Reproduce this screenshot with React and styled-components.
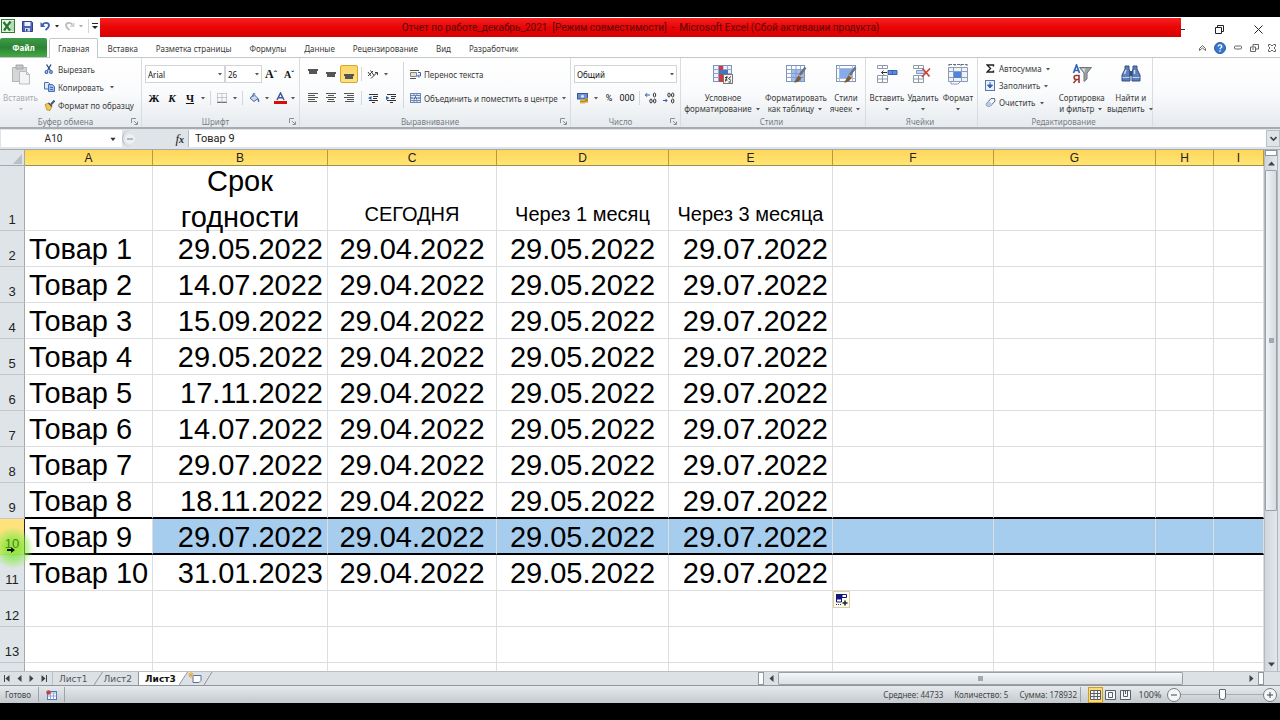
import styled, { createGlobalStyle, css } from 'styled-components';

const GlobalStyle = createGlobalStyle`
    * { box-sizing: border-box; }
    body {
        margin: 0;
        background: #000;
        font-family: 'Noto Sans', 'Open Sans', sans-serif;
        font-size: 8px;
        color: #3b3b3b;
    }
    button, input, select {
        margin: 0;
        padding: 0;
        border: 0;
        background: none;
        font: inherit;
        color: inherit;
        outline: none;
    }
    svg { display: block; flex: none; }
`;

const Window = styled.div`
    display: flex;
    flex-direction: column;
    height: 100vh;
    padding: 17px 0;
`;

/* ---------- title ---------- */

const TitleBar = styled.header`
    display: flex;
    flex: none;
    height: 21px;
    background: #fff;
`;
const QuickAccess = styled.div`
    display: flex;
    align-items: center;
    width: 100px;
    padding: 0 0 3px 1px;
`;
const QuickBtn = styled.button`
    display: flex;
    align-items: center;
    justify-content: center;
    width: ${(props) => props.$w || 18}px;
    height: 16px;
`;
const Title = styled.h1`
    flex: 1;
    margin: 1px 0;
    background: linear-gradient(#f62020, #e80505 50%, #d90000);
    color: #5c0505;
    font-family: Roboto, sans-serif;
    font-size: 10px;
    font-weight: 400;
    line-height: 19px;
    text-align: center;
    white-space: pre;
`;
const WindowBtns = styled.div`
    display: flex;
    align-items: center;
    justify-content: space-between;
    width: 99px;
    padding: 3px 17px 0 0;
`;

/* ---------- tabs ---------- */

const TabRow = styled.nav`
    display: flex;
    flex: none;
    height: 20px;
    background: #fff;
    border-bottom: 1px solid #c3c8cd;
`;
const FileTab = styled.button`
    width: 47px;
    margin-right: 2px;
    border-radius: 2px 2px 0 0;
    background: linear-gradient(#3f9b49, #2b8434 50%, #45a944);
    color: #fff;
    font-weight: 700;
`;
const Tab = styled.button`
    height: 20px;
    padding: 0 9px;
    white-space: nowrap;
    ${(props) => props.$active && css`
        border: 1px solid #c3c8cd;
        border-bottom: 0;
        border-radius: 2px 2px 0 0;
        background: #fff;
        padding: 0 8px;
    `}
`;
const HelpBtns = styled.div`
    display: flex;
    align-items: center;
    margin-left: auto;
`;

/* ---------- ribbon ---------- */

const Ribbon = styled.section`
    display: flex;
    flex: none;
    height: 71px;
    background: linear-gradient(#fff, #fafbfc 50%, #e6eaee);
    border-bottom: 2px solid #a6acb2;
`;
const Group = styled.div`
    display: flex;
    flex-direction: column;
    flex: none;
    width: ${(props) => props.$w}px;
    border-right: 1px solid #d9dde1;
`;
const GroupBody = styled.div`
    display: flex;
    height: 57px;
    padding: ${(props) => props.$pad || '4px 3px 0'};
`;
const GroupLabel = styled.div`
    display: flex;
    align-items: center;
    height: 12px;
    padding-right: 3px;
    color: #777d84;
    span { flex: 1; text-align: center; }
`;
const Col = styled.div`
    display: flex;
    flex-direction: column;
`;
const ToolRow = styled.div`
    display: flex;
    align-items: center;
    height: 24px;
`;
const Tool = styled.button`
    display: flex;
    align-items: center;
    justify-content: center;
    width: 18px;
    height: 18px;
    font-family: 'Liberation Serif', serif;
    font-size: ${(props) => props.$size || 11}px;
    font-weight: 700;
    color: #111;
    ${(props) => props.$on && css`
        border: 1px solid #d9a72b;
        border-radius: 2px;
        background: linear-gradient(#fbd66c, #fbe27f);
    `}
`;
const NumTool = styled(Tool)`
    font-family: Roboto, sans-serif;
    font-size: 9px;
    font-weight: 400;
`;
const CaretBox = styled.span`
    display: inline-flex;
    align-items: center;
    justify-content: center;
    width: 8px;
    height: 8px;
`;
const Sep = styled.span`
    width: 1px;
    height: ${(props) => props.$h || 14}px;
    margin: 0 ${(props) => props.$m || 2}px 0 3px;
    background: #d3d7db;
`;
const TextBtn = styled.button`
    display: flex;
    align-items: center;
    height: ${(props) => props.$h || 18}px;
    white-space: nowrap;
`;
const IconSlot = styled.span`
    display: flex;
    justify-content: center;
    width: 18px;
`;
const BigBtn = styled.button`
    display: flex;
    flex-direction: column;
    align-items: center;
    flex: none;
    width: ${(props) => props.$w}px;
    height: 50px;
    line-height: 11px;
    white-space: nowrap;
    color: ${(props) => (props.$off ? '#a9adb1' : 'inherit')};
    > svg { margin-bottom: 7px; }
    > span { height: 11px; }
`;
const ComboWrap = styled.label`
    display: flex;
    align-items: center;
    width: ${(props) => props.$w}px;
    height: 18px;
    border: 1px solid #d2d5d8;
    background: #fff;
    color: #111;
    select {
        flex: 1;
        min-width: 0;
        height: 16px;
        padding-left: 2px;
        appearance: none;
    }
`;

/* ---------- formula bar ---------- */

const FormulaBar = styled.div`
    display: flex;
    flex: none;
    height: 21px;
    padding: 1px 0 2px 1px;
    background: #dfe4e8;
    border-bottom: 1px solid #a5abb1;
    font-family: Roboto, sans-serif;
    font-size: 11px;
    color: #222;
`;
const NameBox = styled.label`
    display: flex;
    align-items: center;
    width: 121px;
    background: #fff;
    font-size: 10px;
    input { width: 105px; text-align: center; }
    span { margin-left: 3px; }
`;
const FxArea = styled.div`
    display: flex;
    align-items: center;
    justify-content: space-between;
    width: 67px;
    padding-right: 4px;
    border: 1px solid #b3b9bf;
    border-width: 0 1px;
    border-radius: 9px 0 0 9px;
`;
const FxBtn = styled.button`
    font-family: 'Liberation Serif', serif;
    font-size: 13px;
    font-style: italic;
    small { font-size: 10px; font-weight: 700; }
`;
const FormulaInput = styled.input`
    flex: 1;
    padding-left: 6px;
    background: #fff;
`;
const ExpandBtn = styled.button`
    display: flex;
    align-items: center;
    justify-content: center;
    width: 14px;
    border: 1px solid #b9bfc5;
`;

/* ---------- sheet ---------- */

const SheetArea = styled.main`
    display: flex;
    flex: 1;
    min-height: 0;
    background: #dfe4e8;
`;
const GridClip = styled.div`
    flex: 1;
    min-width: 0;
    overflow: hidden;
    background: #fff;
`;
const Grid = styled.table`
    width: 100%;
    table-layout: fixed;
    border-spacing: 0;
    font-family: 'Liberation Sans', Arial, sans-serif;
    color: #000;
    th, td { padding: 0; font-weight: 400; }
`;
const ColHead = styled.th`
    height: 16px;
    border-right: 1px solid #b79a3c;
    border-bottom: 1px solid #a08d4e;
    background: linear-gradient(#ffd65b, #ffe574);
    font-size: 12px;
    line-height: 14px;
    color: #222;
`;
const Corner = styled.td`
    height: 16px;
    border-right: 1px solid #a3a9af;
    border-bottom: 1px solid #a3a9af;
    background: #dfe4e8;
    svg { margin: 2px 2px 0 auto; }
`;
const RowHead = styled.th`
    position: relative;
    height: ${(props) => props.$h}px;
    border-right: 1px solid ${(props) => (props.$on ? '#222' : '#a3a9af')};
    border-bottom: 1px solid #c3c8cd;
    background: ${(props) => (props.$on ? '#ffe27c' : '#dfe4e8')};
    font-size: 13px;
    line-height: 21px;
    vertical-align: bottom;
    color: #222;
`;
const Cell = styled.td`
    border-right: 1px solid #dcdee0;
    border-bottom: ${(props) => (props.$line ? '2px solid #000' : '1px solid #dcdee0')};
    background: ${(props) => (props.$picked ? '#a7cdee' : '#fff')};
    vertical-align: top;
`;
const CellText = styled.div`
    display: flex;
    justify-content: ${(props) => props.$align};
    height: ${(props) => props.$h}px;
    padding: 0 4px;
    font-size: 29px;
    line-height: 36px;
    white-space: nowrap;
`;
const WrapText = styled(CellText)`
    align-items: center;
    padding-top: 2px;
    text-align: center;
    white-space: normal;
`;
const SmallText = styled(CellText)`
    align-items: flex-end;
    font-size: 20px;
    line-height: 32px;
`;
const FillTag = styled.button`
    display: flex;
    align-items: center;
    justify-content: center;
    width: 17px;
    height: 17px;
    border: 1px solid #dccf9a;
    background: #fbfbf6;
`;
/* mouse highlight drawn over the row header */
const Glow = styled.span`
    position: absolute;
    top: 8px;
    left: -8px;
    z-index: 2;
    width: 42px;
    height: 42px;
    border-radius: 50%;
    background: radial-gradient(rgba(120, 232, 50, 0.75) 25%, rgba(150, 235, 90, 0.5) 50%, rgba(190, 240, 150, 0) 70%);
    pointer-events: none;
    svg { margin: 20px 0 0 15px; }
`;
const RowNum = styled.span`
    position: relative;
    z-index: 3;
    color: ${(props) => (props.$on ? '#46841c' : 'inherit')};
`;

const VScroll = styled.div`
    display: flex;
    flex-direction: column;
    width: 16px;
    padding: 0 3px 0 0;
    border-left: 1px solid #b4babf;
    background: linear-gradient(90deg, #cfd5da, #e3e8eb 80%, #9ea5ab 81%, #dfe4e8 90%);
`;
const ScrollBtn = styled.button`
    display: flex;
    align-items: center;
    justify-content: center;
    width: ${(props) => props.$w || 12}px;
    height: 14px;
`;
const SplitBox = styled.span`
    width: ${(props) => props.$w}px;
    height: ${(props) => props.$h}px;
    border: 1px solid #8f969d;
    background: #fff;
`;
const VTrack = styled.div`
    flex: 1;
`;
const VThumb = styled.div`
    display: flex;
    align-items: center;
    justify-content: center;
    height: 70%;
    border: 1px solid #9aa1a8;
    border-radius: 1px;
    background: linear-gradient(90deg, #f1f4f6, #d5dbe0);
`;
const Grip = styled.span`
    width: 5px;
    height: 5px;
    background: #a2a8ae;
`;

/* ---------- bottom bars ---------- */

const SheetBar = styled.div`
    display: flex;
    flex: none;
    height: 15px;
    background: #dce1e5;
    border-top: 1px solid #b9bfc5;
    border-bottom: 1px solid #8f969c;
    font-family: 'DejaVu Sans', sans-serif;
    font-size: 9px;
`;
const SheetNav = styled.div`
    display: flex;
    width: 53px;
    padding-left: 1px;
    border-right: 1px solid #b9bfc5;
    button { width: 12px; display: flex; align-items: center; justify-content: center; }
`;
const SheetTab = styled.button`
    padding: 0 6px;
    color: #555;
    & + svg + & { padding-left: 1px; }
    ${(props) => props.$active && css`
        padding-right: 3px;
        border-left: 1px solid #8f969c;
        background: #fff;
        font-weight: 700;
        color: #111;
    `}
`;
const NewSheet = styled.button`
    display: flex;
    align-items: center;
`;
const HScroll = styled.div`
    display: flex;
    align-items: center;
    width: 506px;
    margin-left: auto;
    margin-right: 16px;
`;
const HTrack = styled.div`
    flex: 1;
    height: 13px;
`;
const HThumb = styled(VThumb)`
    width: 87%;
    height: 13px;
    background: linear-gradient(#f4f6f8, #dbe0e4);
`;

const StatusBar = styled.footer`
    display: flex;
    align-items: center;
    flex: none;
    height: 17px;
    padding: 0 3px 0 5px;
    background: linear-gradient(#e6eaed, #c3c9ce);
    color: #444;
`;
const StatusSep = styled.span`
    width: 1px;
    height: 15px;
    margin: 0 7px 0 ${(props) => props.$m || 7}px;
    background: #9ca3a9;
`;
const Stats = styled.div`
    display: flex;
    gap: 11px;
    margin-left: auto;
`;
const ViewBtn = styled.button`
    display: flex;
    align-items: center;
    justify-content: center;
    width: 15px;
    height: 16px;
    ${(props) => props.$on && css`
        border: 1px solid #d09d25;
        background: #fbdc74;
    `}
`;
const ZoomText = styled.button`
    width: 34px;
    font-size: 9px;
`;
const RoundBtn = styled.button`
    display: flex;
    align-items: center;
    justify-content: center;
    width: 14px;
    height: 14px;
    border: 1px solid #767d83;
    border-radius: 50%;
    background: #f4f6f7;
`;
const ZoomRange = styled.input`
    width: 82px;
    height: 14px;
    appearance: none;
    background: linear-gradient(#a9afb4, #a9afb4) center / 100% 1px no-repeat;
    &::-webkit-slider-thumb {
        appearance: none;
        width: 7px;
        height: 11px;
        border: 1px solid #5d646a;
        border-radius: 1px 1px 3px 3px;
        background: #fff;
    }
`;

/* ---------- icons ---------- */

const Caret = ({ c = '#555', s = 6 }) => (
    <CaretBox>
        <svg width={s} height={s} viewBox="0 0 6 6"><path d="M1 2h4L3 4.500z" fill={c} /></svg>
    </CaretBox>
);

const Arrow = ({ dir, bar }) => {
    const turn = { right: 0, down: 90, left: 180, up: 270 }[dir];
    return (
        <svg width="9" height="9" viewBox="0 0 9 9">
            <g transform={`rotate(${turn} 4.5 4.5)`}>
                <path d="M2.500 1l4 3.500-4 3.500z" fill="#3c4247" />
                {bar && <path d="M7.500 1v7" stroke="#3c4247" />}
            </g>
        </svg>
    );
};

const Launcher = () => (
    <svg width="7" height="7" viewBox="0 0 7 7" fill="none" stroke="#8a9097">
        <path d="M.5 5V.5H5M3 3l3 3M6.500 3.500v3h-3" />
    </svg>
);

const ExcelIcon = () => (
    <svg width="14" height="14" viewBox="0 0 14 14">
        <rect x=".5" y=".5" width="13" height="13" fill="#e5f2e3" stroke="#2b7a35" />
        <path d="M9 2h4v10H9z" fill="#b9d9b5" />
        <path d="M2.500 3l6.500 8.500M9.500 2.500L3 11.500" stroke="#1f7a2d" strokeWidth="2.200" />
    </svg>
);

const SaveIcon = () => (
    <svg width="11" height="11" viewBox="0 0 11 11">
        <path d="M.5.5h9l1 1v9H.5z" fill="#4b63b8" stroke="#2c3f87" />
        <path d="M2.500 1h6v4h-6z" fill="#eef2fb" />
        <path d="M3 7h5v3.500H3z" fill="#c9d3ee" />
        <path d="M4 8h1.500v2.500H4z" fill="#2c3f87" />
    </svg>
);

const UndoIcon = ({ off }) => (
    <svg width="11" height="10" viewBox="0 0 11 10">
        <g transform={off ? 'translate(11 0) scale(-1 1)' : undefined} fill="none" stroke={off ? '#b9bdc2' : '#3861b8'}>
            <path d="M2 4.500C4 1 9 1 9 4.500c0 2-1.500 3-3.500 4.500" strokeWidth="1.900" />
            <path d="M.5 1v5h5z" fill={off ? '#d0d3d6' : '#3861b8'} stroke="none" />
        </g>
    </svg>
);

const PasteIcon = () => (
    <svg width="20" height="21" viewBox="0 0 20 21">
        <path d="M1.500 3.500h14v14h-14z" fill="#d4d6d8" stroke="#b3b6b9" />
        <path d="M5 1h7v4H5z" fill="#c3c6c9" stroke="#a5a8ab" />
        <path d="M8.500 7.500h7l3 3v9.500h-10z" fill="#f3f4f5" stroke="#b9bcbf" />
        <path d="M15.500 7.500v3h3" fill="none" stroke="#b9bcbf" />
    </svg>
);

const CutIcon = () => (
    <svg width="10" height="10" viewBox="0 0 10 10" fill="none" stroke="#27457f" strokeWidth="1.300">
        <path d="M2.500.5l4 6M7 .5l-3.500 6" />
        <circle cx="2.500" cy="8" r="1.300" stroke="#3a68b8" />
        <circle cx="7" cy="8" r="1.300" stroke="#3a68b8" />
    </svg>
);

const CopyIcon = () => (
    <svg width="11" height="10" viewBox="0 0 11 10" fill="#dfe9f8" stroke="#4a70b5">
        <path d="M.5.5h4l1.500 1.500v5H.5z" />
        <path d="M4.500 2.500h4l2 2v5h-6z" fill="#9dbcec" />
        <path d="M6 5.500h3M6 7.500h3" />
    </svg>
);

const BrushIcon = () => (
    <svg width="11" height="11" viewBox="0 0 11 11">
        <path d="M10.500.5L7 4.500" stroke="#3f5689" strokeWidth="2" />
        <path d="M1 4.500l4-1.500 3 3-2 4.500L3 10z" fill="#efc94c" stroke="#a98021" strokeWidth=".7" />
        <path d="M4.500 3l3.500 3.500" stroke="#4b4b4b" strokeWidth="1.300" />
    </svg>
);

const BorderIcon = () => (
    <svg width="10" height="10" viewBox="0 0 10 10" fill="none" stroke="#9a9fa5" strokeDasharray="1 1">
        <path d="M.5.5h9v8H.5zM5 .5v8M.5 4.500h9" />
        <path d="M0 9.500h10" stroke="#777" strokeDasharray="none" />
    </svg>
);

const BucketIcon = () => (
    <svg width="11" height="11" viewBox="0 0 11 11">
        <path d="M1 5l4-3.500 4 4-4 3z" fill="#cbd9ef" stroke="#4b6799" />
        <path d="M4 4V1.500C4 0 6 0 6 1.500" fill="none" stroke="#4b6799" />
        <path d="M8.500 5c2 .5 2 3 1.500 4.500C8.500 9 8.500 7 8.500 5z" fill="#3b67b7" />
    </svg>
);

const FontColorIcon = () => (
    <svg width="13" height="13" viewBox="0 0 13 13">
        <path d="M3 8l3.500-7L10 8M4.300 5.700h4.400" fill="none" stroke="#3c5a99" strokeWidth="1.500" />
        <path d="M0 9h13v3H0z" fill="#d90c0c" />
    </svg>
);

// one [x1, x2] pair per line
const Lines = ({ rows, top = 0, step = 2 }) => (
    <svg width="10" height="10" viewBox="0 0 10 10" stroke="#555">
        {rows.map(([a, b], i) => <path key={i} d={`M${a} ${top + i * step + 0.5}H${b}`} />)}
    </svg>
);
const BLOCK = [[0, 10], [0, 10], [1, 9], [1, 9], [1, 9]];

const OrientIcon = () => (
    <svg width="12" height="11" viewBox="0 0 12 11" fill="none" stroke="#3a3a3a">
        <path d="M1 3l3 4M3.500 1.500l3.500 5M1 7l5-5M4 9.500L10 3.500M8 3.500h2.500V6" />
    </svg>
);

const IndentIcon = ({ flip }) => (
    <svg width="11" height="10" viewBox="0 0 11 10" stroke="#333">
        <path d="M1 1.500h9M5 3.500h5M5 5.500h4M1 7.500h9M4 9.500h3" />
        <path d={flip ? 'M0 3l3.500 2L0 7z' : 'M3.500 3L0 5l3.500 2z'} fill="#2f5ca8" stroke="none" />
    </svg>
);

const WrapIcon = () => (
    <svg width="11" height="11" viewBox="0 0 11 11" fill="none">
        <path d="M0 1.500h9M0 9.500h6" stroke="#555" />
        <path d="M.5 3.500h6v4h-6z" fill="#f5dfb5" stroke="#7d86a0" />
        <path d="M8 3.500h2.500V7H8M9 5.500L7.500 7 9 8.500" stroke="#3b63ad" />
    </svg>
);

const MergeIcon = () => (
    <svg width="11" height="10" viewBox="0 0 11 10">
        <rect x=".5" y=".5" width="10" height="9" fill="#e7eef9" stroke="#6b86b8" />
        <path d="M.5 2.500h10M.5 7.500h10M4 .5v2M7 .5v2M4 7.500v2M7 7.500v2" stroke="#6b86b8" />
        <path d="M1 5h2.500M10 5H7.500M4.200 6.500L5.500 3.500l1.300 3" stroke="#27457f" fill="none" />
    </svg>
);

const MoneyIcon = () => (
    <svg width="12" height="11" viewBox="0 0 12 11">
        <rect x=".5" y=".5" width="10" height="5.500" fill="#6d8fd2" stroke="#35569d" />
        <circle cx="5.500" cy="3.200" r="1.500" fill="#dfe9f9" />
        <path d="M3 7h5v3.500H3z" fill="#e4b83d" />
        <path d="M8 5h3v4.500H8z" fill="#c9962b" />
        <path d="M3 8.500h5M8 7h3" stroke="#8d6a1a" strokeWidth=".6" />
    </svg>
);

const DecIcon = ({ more }) => (
    <svg width="12" height="12" viewBox="0 0 12 12" fill="none" stroke="#333">
        <ellipse cx={more ? 9.500 : 6} cy="3" rx="1.200" ry="2" />
        {!more && <ellipse cx="9.700" cy="3" rx="1.200" ry="2" />}
        <ellipse cx="9.700" cy="9" rx="1.200" ry="2" />
        {more && <ellipse cx="6" cy="9" rx="1.200" ry="2" />}
        <path d={more ? 'M0 3h5M2 1.200L.5 3 2 4.800' : 'M0 8.500h4M2.500 6.800L4 8.500l-1.500 1.700'} stroke="#2f5ca8" />
    </svg>
);

const SheetGrid = ({ children, fill = '#eef3fb' }) => (
    <svg width="22" height="21" viewBox="0 0 22 21">
        <rect x="1.500" y="1.500" width="18" height="16" fill={fill} stroke="#7b93bd" />
        <path d="M1.500 5.500h18M1.500 9.500h18M1.500 13.500h18M6.500 1.500v16M11 1.500v16M15.500 1.500v16" stroke="#8fa5cb" />
        {children}
    </svg>
);

const Paint = () => (
    <>
        <path d="M20.500 3.500L14 12" stroke="#68707c" strokeWidth="2.400" />
        <path d="M14.500 11l2 2c-1 4-4 5.500-7.500 5.500 2-2 2-5 5.500-7.500z" fill="#7a5a3c" />
        <path d="M14 11l2.500 2" stroke="#d6b25e" strokeWidth="1.500" />
    </>
);

const CondIcon = () => (
    <SheetGrid>
        <path d="M7 2h4v4H7zM7 14h4v4H7z" fill="#cf3b3b" />
        <path d="M7 6h9v4H7z" fill="#4672c4" />
        <path d="M7 10h6v4H7z" fill="#cf3b3b" />
        <rect x="11.500" y="10.500" width="9" height="9" fill="#f4f4f4" stroke="#777" />
        <path d="M13 13.500h2.500M13 16h2.500M15 12l-1.500 5.500M19 12.500l-2.500 2 2.500 2M16.500 18H19" fill="none" stroke="#333" />
    </SheetGrid>
);
const TableIcon = () => (
    <SheetGrid fill="#fff">
        <path d="M7 6h12v12H7z" fill="#6e97e0" opacity=".65" />
        <Paint />
    </SheetGrid>
);
const StyleIcon = () => (
    <svg width="22" height="21" viewBox="0 0 22 21">
        <rect x="1.500" y="1.500" width="19" height="16" fill="#fff" stroke="#7b93bd" />
        <path d="M1.500 4.500h19M1.500 14.500h19M4.500 1.500v16M17.500 1.500v16" stroke="#a9b9d6" />
        <path d="M5 5h12v9H5z" fill="#86abea" />
        <Paint />
    </svg>
);

const Cells3 = ({ children }) => (
    <svg width="22" height="21" viewBox="0 0 22 21">
        <g fill="#fff" stroke="#8c99ad">
            <path d="M1.500 1.500h10v3h-10zM6.500 1.500v3" />
            <path d="M1.500 11.500h10v7h-10zM6.500 11.500v7M1.500 15h10" />
        </g>
        {children}
    </svg>
);
const InsertIcon = () => (
    <Cells3>
        <path d="M12 6.500h9v4h-9zM16.500 6.500v4" fill="#5d8be0" stroke="#3c5fa8" />
        <path d="M11 8.500H5.500M7.500 6.500l-2 2 2 2" fill="none" stroke="#333" />
    </Cells3>
);
const DeleteIcon = () => (
    <Cells3>
        <path d="M4.500 6.500h8v3h-8z" fill="#c6d6f3" stroke="#8299c4" />
        <path d="M10.500 4.500l7 8M18 4.500l-8 8.500" stroke="#d2402f" strokeWidth="1.700" />
    </Cells3>
);
const FormatIcon = () => (
    <svg width="22" height="21" viewBox="0 0 22 21">
        <path d="M2 .5h18M2 0v2M8 0v2M14 0v2M20 0v2" stroke="#66707f" strokeDasharray="3 1" />
        <path d="M1.500 3.500h19v14h-19zM6.500 3.500v14M14.500 3.500v14M1.500 7.500h19M1.500 13.500h19" fill="#eef3fb" stroke="#8c9cb8" />
        <path d="M7 8h7v6H7z" fill="#4f83dd" />
        <path d="M4 18v2h7l2-2" fill="#fff" stroke="#8c9cb8" />
    </svg>
);

const SigmaIcon = () => (
    <svg width="9" height="9" viewBox="0 0 9 9" fill="none" stroke="#222" strokeWidth="1.400">
        <path d="M7.500 2.500V1H1.200l3.300 3.500L1.200 8h6.300V6.500" />
    </svg>
);
const FillIcon = () => (
    <svg width="10" height="11" viewBox="0 0 10 11">
        <rect x=".5" y=".5" width="9" height="10" fill="#e9f0fc" stroke="#5876b0" />
        <path d="M5 2v4.500M2.500 5L5 8l2.500-3z" fill="#2f62c0" stroke="#2f62c0" />
    </svg>
);
const EraserIcon = () => (
    <svg width="11" height="9" viewBox="0 0 11 9">
        <path d="M1 6l5-5.500h3.500L10 3 5.500 8H2z" fill="#f3f6fb" stroke="#566a92" />
        <path d="M1 6l3-3 3 3-1.500 2H2z" fill="#b8c8e6" />
    </svg>
);
const SortIcon = () => (
    <svg width="22" height="21" viewBox="0 0 22 21">
        <path d="M2.500 9L5.500 1l3 8M3.500 6.500h4" fill="none" stroke="#3366bb" strokeWidth="1.700" />
        <path d="M8 19v-7.500H5c-2.500 0-2.500 4 0 4h3M5.500 15.500L2.500 19" fill="none" stroke="#a23434" strokeWidth="1.600" />
        <path d="M8.500 3.500h12l-4.500 5.500v6l-3 2.500V9z" fill="#9da2a8" stroke="#70757b" />
        <path d="M10.500 4.500h4l-1 4z" fill="#d8dbde" />
    </svg>
);
const FindIcon = () => (
    <svg width="20" height="21" viewBox="0 0 20 21">
        <path d="M4 2h4v3l1 3v9H1v-6l3-6zM12 2h4v3l3 6v6h-8V8l1-3z" fill="#5c7fbd" stroke="#34507f" />
        <path d="M8.500 7h3v5h-3z" fill="#34507f" />
        <path d="M3.500 10l1.500-4M13.500 10V6" stroke="#c9dbf5" strokeWidth="1.500" />
        <path d="M1.500 13.500h7M11.500 13.500h7" stroke="#c2d0e8" />
    </svg>
);

const TagIcon = () => (
    <svg width="13" height="13" viewBox="0 0 13 13">
        <path d="M1 1h6v5H1z" fill="#15157a" />
        <path d="M7 1.500h4.500v3H7zM1.500 6h5v3h-5z" fill="#fff" stroke="#15157a" />
        <path d="M1 11.500h6" stroke="#333" strokeDasharray="1 1" />
        <path d="M7.500 10h5M10 7.500v5" stroke="#222" strokeWidth="1.500" />
    </svg>
);

const ViewIcon = ({ kind }) => (
    <svg width="11" height="10" viewBox="0 0 11 10" fill="none" stroke="#5a6066">
        <path d="M.5.5h10v9H.5z" fill="#f7f8f8" />
        {kind === 'grid' && <path d="M.5 3.500h10M.5 6.500h10M4 .5v9M7.500 .5v9" />}
        {kind === 'page' && <path d="M3.500 2.500h4v5h-4z" />}
        {kind === 'break' && <path d="M3.500 0v6.500h4V0M5.500 0v4" />}
    </svg>
);

const MacroIcon = () => (
    <svg width="11" height="10" viewBox="0 0 11 10">
        <rect x="1.500" y="1.500" width="9" height="8" fill="#fff" stroke="#4e74b8" />
        <path d="M1.500 3h9M4.500 3v6.500M7.500 3v6.500M1.500 6h9" stroke="#8aa7db" />
        <circle cx="2.500" cy="2.500" r="2.200" fill="#c2433c" />
    </svg>
);

const NewSheetIcon = () => (
    <svg width="25" height="13" viewBox="0 0 25 13">
        <path d="M5 3.500h8v5l-2 2H5z" fill="#fff" stroke="#5a6fa8" />
        <path d="M3 0v6M0 3h6M1 1l4 4M5 1L1 5" stroke="#e0a93a" />
        <path d="M16 13l8-13" stroke="#8f969c" />
    </svg>
);

const Slant = ({ fill = 'none' }) => (
    <svg width="9" height="13" viewBox="0 0 9 13">
        <path d="M0 13L8.500 0H0z" fill={fill} />
        <path d="M0 13L8.500 0" stroke="#8f969c" />
    </svg>
);

/* ---------- data ---------- */

const TABS = ['Главная', 'Вставка', 'Разметка страницы', 'Формулы', 'Данные', 'Рецензирование', 'Вид', 'Разработчик'];
const COLS = [['A', 128], ['B', 175], ['C', 169], ['D', 172], ['E', 164], ['F', 161], ['G', 162], ['H', 58], ['I']];
const DATES = [
    '29.05.2022', '14.07.2022', '15.09.2022', '29.05.2022', '17.11.2022',
    '14.07.2022', '29.07.2022', '18.11.2022', '29.07.2022', '31.01.2023',
];
const ROWS = [
    ['', 'Срок годности', 'СЕГОДНЯ', 'Через 1 месяц', 'Через 3 месяца'],
    ...DATES.map((date, i) => [`Товар ${i + 1}`, date, '29.04.2022', '29.05.2022', '29.07.2022']),
    [], [], [],
];
const ALIGN = ['flex-start', 'flex-end', 'center', 'center', 'flex-end'];
const PICKED = 10;

const Label = ({ children, launch }) => (
    <GroupLabel><span>{children}</span>{launch && <Launcher />}</GroupLabel>
);

const Combo = ({ value, w, label }) => (
    <ComboWrap $w={w}>
        <select aria-label={label}><option>{value}</option></select>
        <Caret />
    </ComboWrap>
);

const Header = () => (
    <>
        <TitleBar>
            <QuickAccess>
                <ExcelIcon />
                <QuickBtn $w={26} aria-label="Сохранить"><SaveIcon /></QuickBtn>
                <QuickBtn $w={10} aria-label="Отменить"><UndoIcon /></QuickBtn>
                <QuickBtn $w={12} aria-label="Список отмены"><Caret c="#222" /></QuickBtn>
                <QuickBtn $w={14} aria-label="Вернуть"><UndoIcon off /></QuickBtn>
                <QuickBtn $w={9} aria-label="Список возврата"><Caret c="#aaa" /></QuickBtn>
                <Sep $m={1} />
                <QuickBtn $w={10} aria-label="Настройка панели">
                    <svg width="6" height="7" viewBox="0 0 6 7"><path d="M0 .5h6" stroke="#222" /><path d="M0 3h6L3 6z" fill="#222" /></svg>
                </QuickBtn>
            </QuickAccess>
            <Title>{'Отчет по работе_декабрь_2021  [Режим совместимости]  -  Microsoft Excel (Сбой активации продукта)'}</Title>
            <WindowBtns>
                <QuickBtn $w={4} aria-label="Свернуть">
                    <svg width="4" height="9" viewBox="0 0 4 9"><path d="M0 4.500h4" stroke="#333" /></svg>
                </QuickBtn>
                <QuickBtn $w={30} aria-label="Развернуть">
                    <svg width="9" height="9" viewBox="0 0 9 9" fill="none" stroke="#222"><path d="M.5 2.500h6v6h-6zM2.500 2V.5h6v6H7" /></svg>
                </QuickBtn>
                <QuickBtn $w={9} aria-label="Закрыть">
                    <svg width="9" height="9" viewBox="0 0 9 9" stroke="#222"><path d="M.5.5l8 8M8.500.5l-8 8" /></svg>
                </QuickBtn>
            </WindowBtns>
        </TitleBar>
        <TabRow>
            <FileTab>Файл</FileTab>
            {TABS.map((name, i) => <Tab key={name} $active={i === 0}>{name}</Tab>)}
            <HelpBtns>
                <QuickBtn aria-label="Свернуть ленту">
                    <svg width="7" height="6" viewBox="0 0 7 6" fill="none" stroke="#666"><path d="M.5 3.500l3-3 3 3v2l-3-2.500-3 2.500z" /></svg>
                </QuickBtn>
                <QuickBtn aria-label="Справка">
                    <svg width="12" height="12" viewBox="0 0 12 12" fill="none">
                        <circle cx="6" cy="6" r="5.500" fill="#3576cf" stroke="#2a5ca5" />
                        <path d="M4.200 4.500C4.200 2.300 7.800 2.300 7.800 4.500 7.800 5.800 6 5.800 6 7.300M6 8.300v1.400" stroke="#fff" strokeWidth="1.300" />
                    </svg>
                </QuickBtn>
                <QuickBtn $w={17} aria-label="Свернуть книгу">
                    <svg width="8" height="5" viewBox="0 0 8 5" fill="none" stroke="#666"><rect x=".5" y="1" width="7" height="3" rx="1" /></svg>
                </QuickBtn>
                <QuickBtn $w={17} aria-label="Восстановить книгу">
                    <svg width="9" height="8" viewBox="0 0 9 8" fill="#fff" stroke="#666"><path d="M3 .5h5.500v4.500H3z" /><path d="M.5 3h5v4.500h-5zM2 5h2" /></svg>
                </QuickBtn>
                <QuickBtn $w={17} aria-label="Закрыть книгу">
                    <svg width="8" height="8" viewBox="0 0 8 8" fill="#fff" stroke="#666"><path d="M.5.5h2L4 2 5.500.5h2v2L6 4l1.500 1.500v2h-2L4 6 2.500 7.500h-2v-2L2 4 .5 2.500z" /></svg>
                </QuickBtn>
            </HelpBtns>
        </TabRow>
    </>
);

const RibbonPanel = () => (
    <Ribbon>
        <Group $w={142}>
            <GroupBody $pad="2px 0 0 1px">
                <GroupBody $pad="4px 0 0">
                    <BigBtn $w={39} $off><PasteIcon />Вставить<Caret c="#bbb" /></BigBtn>
                </GroupBody>
                <Col>
                    <TextBtn><IconSlot><CutIcon /></IconSlot>Вырезать</TextBtn>
                    <TextBtn><IconSlot><CopyIcon /></IconSlot>Копировать&ensp;<Caret /></TextBtn>
                    <TextBtn><IconSlot><BrushIcon /></IconSlot>Формат по образцу</TextBtn>
                </Col>
            </GroupBody>
            <Label launch>Буфер обмена</Label>
        </Group>

        <Group $w={158}>
            <GroupBody>
                <Col>
                    <ToolRow>
                        <Combo value="Arial" w={80} label="Шрифт" />
                        <Combo value="26" w={37} label="Размер шрифта" />
                        <Tool $size={12}>A<sup>ˆ</sup></Tool>
                        <Tool $size={10}>A<sup>ˇ</sup></Tool>
                    </ToolRow>
                    <ToolRow>
                        <Tool>Ж</Tool>
                        <Tool><i>К</i></Tool>
                        <Tool><u>Ч</u></Tool>
                        <Caret />
                        <Sep />
                        <Tool aria-label="Границы"><BorderIcon /></Tool>
                        <Caret />
                        <Sep />
                        <Tool aria-label="Цвет заливки"><BucketIcon /></Tool>
                        <Caret />
                        <Tool aria-label="Цвет текста"><FontColorIcon /></Tool>
                        <Caret />
                    </ToolRow>
                </Col>
            </GroupBody>
            <Label launch>Шрифт</Label>
        </Group>

        <Group $w={271}>
            <GroupBody $pad="4px 0 0 4px">
                <Col>
                    <ToolRow>
                        <Tool aria-label="По верхнему краю"><Lines rows={BLOCK} step={1} /></Tool>
                        <Tool aria-label="По середине"><Lines rows={BLOCK} top={3} step={1} /></Tool>
                        <Tool $on aria-label="По нижнему краю"><Lines rows={BLOCK} top={5} step={1} /></Tool>
                        <Sep />
                        <Tool aria-label="Ориентация"><OrientIcon /></Tool>
                        <Caret />
                    </ToolRow>
                    <ToolRow>
                        <Tool aria-label="По левому краю"><Lines rows={[[0, 10], [0, 7], [0, 10], [0, 7], [0, 9]]} /></Tool>
                        <Tool aria-label="По центру"><Lines rows={[[0, 10], [2, 8], [0, 10], [2, 8], [1, 9]]} /></Tool>
                        <Tool aria-label="По правому краю"><Lines rows={[[0, 10], [3, 10], [0, 10], [3, 10], [1, 10]]} /></Tool>
                        <Sep />
                        <Tool aria-label="Уменьшить отступ"><IndentIcon /></Tool>
                        <Tool aria-label="Увеличить отступ"><IndentIcon flip /></Tool>
                    </ToolRow>
                </Col>
                <Sep $h={46} />
                <Col>
                    <ToolRow><TextBtn><IconSlot><WrapIcon /></IconSlot>Перенос текста</TextBtn></ToolRow>
                    <ToolRow><TextBtn><IconSlot><MergeIcon /></IconSlot>Объединить и поместить в центре&nbsp;<Caret /></TextBtn></ToolRow>
                </Col>
            </GroupBody>
            <Label launch>Выравнивание</Label>
        </Group>

        <Group $w={110}>
            <GroupBody>
                <Col>
                    <ToolRow><Combo value="Общий" w={103} label="Числовой формат" /></ToolRow>
                    <ToolRow>
                        <Tool aria-label="Денежный формат"><MoneyIcon /></Tool>
                        <Caret />
                        <NumTool>%</NumTool>
                        <NumTool>000</NumTool>
                        <Sep />
                        <Tool aria-label="Увеличить разрядность"><DecIcon more /></Tool>
                        <Tool aria-label="Уменьшить разрядность"><DecIcon /></Tool>
                    </ToolRow>
                </Col>
            </GroupBody>
            <Label launch>Число</Label>
        </Group>

        <Group $w={185}>
            <GroupBody $pad="6px 0 0 2px">
                <BigBtn $w={80}><CondIcon />Условное<span>форматирование <Caret /></span></BigBtn>
                <BigBtn $w={66}><TableIcon />Форматировать<span>как таблицу <Caret /></span></BigBtn>
                <BigBtn $w={34}><StyleIcon />Стили<span>ячеек <Caret /></span></BigBtn>
            </GroupBody>
            <Label>Стили</Label>
        </Group>

        <Group $w={112}>
            <GroupBody $pad="6px 0 0 3px">
                <BigBtn $w={36}><InsertIcon />Вставить<Caret /></BigBtn>
                <BigBtn $w={36}><DeleteIcon />Удалить<Caret /></BigBtn>
                <BigBtn $w={34}><FormatIcon />Формат<Caret /></BigBtn>
            </GroupBody>
            <Label>Ячейки</Label>
        </Group>

        <Group $w={175}>
            <GroupBody $pad="2px 0 0 3px">
                <Col>
                    <TextBtn $h={17}><IconSlot><SigmaIcon /></IconSlot>Автосумма&nbsp;<Caret /></TextBtn>
                    <TextBtn $h={17}><IconSlot><FillIcon /></IconSlot>Заполнить&nbsp;<Caret /></TextBtn>
                    <TextBtn $h={17}><IconSlot><EraserIcon /></IconSlot>Очистить&nbsp;<Caret /></TextBtn>
                </Col>
                <GroupBody $pad="4px 0 0 4px">
                    <BigBtn $w={52}><SortIcon />Сортировка<span>и фильтр <Caret /></span></BigBtn>
                    <BigBtn $w={46}><FindIcon />Найти и<span>выделить <Caret /></span></BigBtn>
                </GroupBody>
            </GroupBody>
            <Label>Редактирование</Label>
        </Group>
    </Ribbon>
);

const SheetCell = ({ num, col, h, children }) => {
    if (num > 1) {
        return <CellText $h={h} $align={ALIGN[col]}>{children}</CellText>;
    }
    const Text = col === 1 ? WrapText : SmallText;
    return <Text $h={h} $align="center">{children}</Text>;
};

const SheetRow = ({ num, data }) => {
    const h = num === 1 ? 65 : 36;
    const on = num === PICKED;
    const line = on || num === PICKED - 1;
    return (
        <tr>
            <RowHead $h={h} $on={on} scope="row">
                {on && <Glow><svg width="8" height="6" viewBox="0 0 8 6"><path d="M0 2h4V0l4 3-4 3V4H0z" fill="#111" /></svg></Glow>}
                {num < ROWS.length && <RowNum $on={on}>{num}</RowNum>}
            </RowHead>
            {COLS.map(([name], i) => (
                <Cell key={name} $line={line} $picked={on && i > 0}>
                    {num === 12 && name === 'F' && <FillTag aria-label="Параметры автозаполнения"><TagIcon /></FillTag>}
                    {data[i] && <SheetCell num={num} col={i} h={line ? h - 2 : h - 1}>{data[i]}</SheetCell>}
                </Cell>
            ))}
        </tr>
    );
};

const App = () => {
    return(
        <Window>
            <GlobalStyle />
            <Header />
            <RibbonPanel />

            <FormulaBar>
                <NameBox><input aria-label="Имя" defaultValue="A10" /><Caret c="#333" s={8} /></NameBox>
                <FxArea>
                    <svg width="16" height="14" viewBox="0 0 16 14"><circle cx="7" cy="7" r="5" fill="#eef1f3" /><path d="M4 7h6" stroke="#b3b9bf" strokeWidth="2" /></svg>
                    <FxBtn>f<small>x</small></FxBtn>
                </FxArea>
                <FormulaInput aria-label="Формула" defaultValue="Товар 9" />
                <ExpandBtn aria-label="Развернуть строку формул">
                    <svg width="7" height="6" viewBox="0 0 7 6" fill="none" stroke="#444" strokeWidth="1.600"><path d="M.5 1l3 3 3-3" /></svg>
                </ExpandBtn>
            </FormulaBar>

            <SheetArea>
                <GridClip>
                    <Grid>
                        <colgroup>
                            <col width="25" />
                            {COLS.map(([name, w]) => <col key={name} width={w} />)}
                        </colgroup>
                        <thead>
                            <tr>
                                <Corner><svg width="9" height="10" viewBox="0 0 9 10"><path d="M9 0v10H0z" fill="#b9c0c7" /></svg></Corner>
                                {COLS.map(([name]) => <ColHead key={name} scope="col">{name}</ColHead>)}
                            </tr>
                        </thead>
                        <tbody>
                            {ROWS.map((data, i) => <SheetRow key={i} num={i + 1} data={data} />)}
                        </tbody>
                    </Grid>
                </GridClip>
                <VScroll>
                    <SplitBox $w={12} $h={6} />
                    <ScrollBtn aria-label="Вверх"><Arrow dir="up" /></ScrollBtn>
                    <VTrack><VThumb><Grip /></VThumb></VTrack>
                    <ScrollBtn aria-label="Вниз"><Arrow dir="down" /></ScrollBtn>
                </VScroll>
            </SheetArea>

            <SheetBar>
                <SheetNav>
                    <button aria-label="Первый лист"><Arrow dir="left" bar /></button>
                    <button aria-label="Предыдущий лист"><Arrow dir="left" /></button>
                    <button aria-label="Следующий лист"><Arrow dir="right" /></button>
                    <button aria-label="Последний лист"><Arrow dir="right" bar /></button>
                </SheetNav>
                <SheetTab>Лист1</SheetTab>
                <Slant />
                <SheetTab>Лист2</SheetTab>
                <SheetTab $active>Лист3</SheetTab>
                <Slant fill="#fff" />
                <NewSheet aria-label="Вставить лист"><NewSheetIcon /></NewSheet>
                <HScroll>
                    <SplitBox $w={6} $h={13} />
                    <ScrollBtn $w={14} aria-label="Влево"><Arrow dir="left" /></ScrollBtn>
                    <HTrack><HThumb><Grip /></HThumb></HTrack>
                    <ScrollBtn $w={14} aria-label="Вправо"><Arrow dir="right" /></ScrollBtn>
                    <SplitBox $w={6} $h={13} />
                </HScroll>
            </SheetBar>

            <StatusBar>
                <span>Готово</span>
                <StatusSep />
                <MacroIcon />
                <StatusSep />
                <Stats>
                    <span>Среднее: 44733</span>
                    <span>Количество: 5</span>
                    <span>Сумма: 178932</span>
                </Stats>
                <StatusSep $m={3} />
                <ViewBtn $on aria-label="Обычный"><ViewIcon kind="grid" /></ViewBtn>
                <ViewBtn aria-label="Разметка страницы"><ViewIcon kind="page" /></ViewBtn>
                <ViewBtn aria-label="Страничный"><ViewIcon kind="break" /></ViewBtn>
                <ZoomText>100%</ZoomText>
                <RoundBtn aria-label="Уменьшить масштаб">
                    <svg width="8" height="8" viewBox="0 0 8 8" stroke="#444"><path d="M1 4h6" /></svg>
                </RoundBtn>
                <ZoomRange type="range" aria-label="Масштаб" defaultValue="50" />
                <RoundBtn aria-label="Увеличить масштаб">
                    <svg width="8" height="8" viewBox="0 0 8 8" stroke="#444"><path d="M1 4h6M4 1v6" /></svg>
                </RoundBtn>
            </StatusBar>
        </Window>
    );
}
export default App;
